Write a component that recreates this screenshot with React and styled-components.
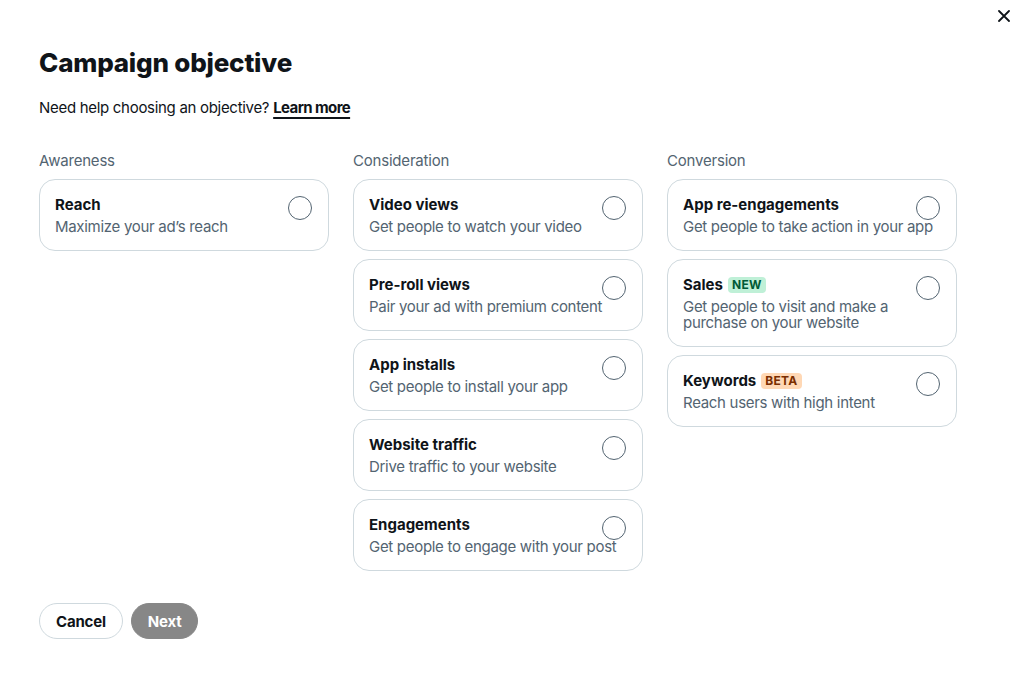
import React from 'react';
import styled, { createGlobalStyle } from 'styled-components';

const GlobalStyle = createGlobalStyle`
  html, body {
    margin: 0;
    padding: 0;
    background: #ffffff;
  }
  body {
    font-family: 'Inter', 'Liberation Sans', sans-serif;
    color: #0f1419;
    -webkit-font-smoothing: antialiased;
  }
`;

// Fundal modal
const Page = styled.div`
  position: relative;
  width: 1026px;
  height: 679px;
  box-sizing: border-box;
  padding: 46px 39px 0;
`;

const CloseButton = styled.button`
  position: absolute;
  top: 6px;
  right: 12px;
  width: 20px;
  height: 20px;
  padding: 0;
  border: none;
  background: none;
  display: flex;
  align-items: center;
  justify-content: center;
  cursor: pointer;
`;

const Title = styled.h1`
  margin: 0;
  font-size: 26px;
  line-height: 34px;
  font-weight: 800;
  letter-spacing: -0.2px;
  color: #0f1419;
`;

const Help = styled.p`
  margin: 18px 0 0;
  font-size: 15px;
  line-height: 20px;
  letter-spacing: -0.3px;
  color: #0f1419;
`;

const LearnMore = styled.a`
  font-weight: 700;
  letter-spacing: -0.6px;
  color: #0f1419;
  text-decoration: underline;
  text-underline-offset: 4px;
  text-decoration-thickness: 1.5px;
`;

const Columns = styled.div`
  display: grid;
  grid-template-columns: repeat(3, 290px);
  column-gap: 24px;
  margin-top: 33px;
  align-items: start;
`;

const Column = styled.div`
  display: flex;
  flex-direction: column;
  gap: 8px;
`;

const ColumnLabel = styled.div`
  font-size: 15px;
  line-height: 20px;
  letter-spacing: -0.2px;
  color: #536471;
`;

const Card = styled.label`
  position: relative;
  display: flex;
  flex-direction: column;
  gap: 4px;
  padding: 15px 50px 15px 15px;
  border: 1px solid #cfd9de;
  border-radius: 16px;
  cursor: pointer;
`;

const CardTitle = styled.div`
  display: flex;
  align-items: center;
  gap: 5px;
  font-size: 15px;
  line-height: 20px;
  font-weight: 700;
  color: #0f1419;
  white-space: nowrap;
`;

const CardText = styled.div`
  font-size: 15px;
  line-height: 16px;
  letter-spacing: -0.3px;
  color: #536471;
  margin-right: ${p => (p.$wrap ? '0' : '-40px')};
`;

const Radio = styled.span`
  position: absolute;
  top: 16px;
  right: 16px;
  width: 22px;
  height: 22px;
  border: 1.25px solid #536471;
  border-radius: 50%;
`;

const Badge = styled.span`
  display: inline-block;
  padding: 0 4px;
  border-radius: 4px;
  font-size: 12px;
  line-height: 16px;
  font-weight: 700;
  letter-spacing: 0.3px;
  background: ${p => (p.$tone === 'beta' ? '#ffd8b5' : '#bff0d7')};
  color: ${p => (p.$tone === 'beta' ? '#7a2e00' : '#005a36')};
`;

const Footer = styled.div`
  position: absolute;
  left: 39px;
  top: 603px;
  display: flex;
  gap: 8px;
`;

const Button = styled.button`
  height: 36px;
  padding: 0 16px;
  border-radius: 18px;
  font-family: inherit;
  font-size: 15px;
  font-weight: 700;
  letter-spacing: -0.2px;
  border: 1px solid ${p => (p.$primary ? '#878787' : '#cfd9de')};
  background: ${p => (p.$primary ? '#878787' : '#ffffff')};
  color: ${p => (p.$primary ? '#ffffff' : '#0f1419')};
  cursor: pointer;
`;

const columns = [
  {
    label: 'Awareness',
    items: [{ title: 'Reach', text: 'Maximize your ad’s reach' }],
  },
  {
    label: 'Consideration',
    items: [
      { title: 'Video views', text: 'Get people to watch your video' },
      { title: 'Pre-roll views', text: 'Pair your ad with premium content' },
      { title: 'App installs', text: 'Get people to install your app' },
      { title: 'Website traffic', text: 'Drive traffic to your website' },
      { title: 'Engagements', text: 'Get people to engage with your post' },
    ],
  },
  {
    label: 'Conversion',
    items: [
      { title: 'App re-engagements', text: 'Get people to take action in your app' },
      { title: 'Sales', badge: 'NEW', text: 'Get people to visit and make a purchase on your website', wrap: true },
      { title: 'Keywords', badge: 'BETA', text: 'Reach users with high intent' },
    ],
  },
];

const App = () => {
  return (
    <Page>
      <GlobalStyle />
      <CloseButton aria-label="Close">
        <svg width="12" height="12" viewBox="0 0 12 12">
          <path d="M1 1 L11 11 M11 1 L1 11" stroke="#0f1419" strokeWidth="1.8" strokeLinecap="round" />
        </svg>
      </CloseButton>
      <Title>Campaign objective</Title>
      <Help>
        Need help choosing an objective? <LearnMore href="#">Learn more</LearnMore>
      </Help>
      <Columns>
        {columns.map(col => (
          <Column key={col.label}>
            <ColumnLabel>{col.label}</ColumnLabel>
            {col.items.map(item => (
              <Card key={item.title}>
                <CardTitle>
                  {item.title}
                  {item.badge && (
                    <Badge $tone={item.badge === 'BETA' ? 'beta' : 'new'}>{item.badge}</Badge>
                  )}
                </CardTitle>
                <CardText $wrap={item.wrap}>{item.text}</CardText>
                <Radio />
              </Card>
            ))}
          </Column>
        ))}
      </Columns>
      <Footer>
        <Button>Cancel</Button>
        <Button $primary>Next</Button>
      </Footer>
    </Page>
  );
};

export default App;
